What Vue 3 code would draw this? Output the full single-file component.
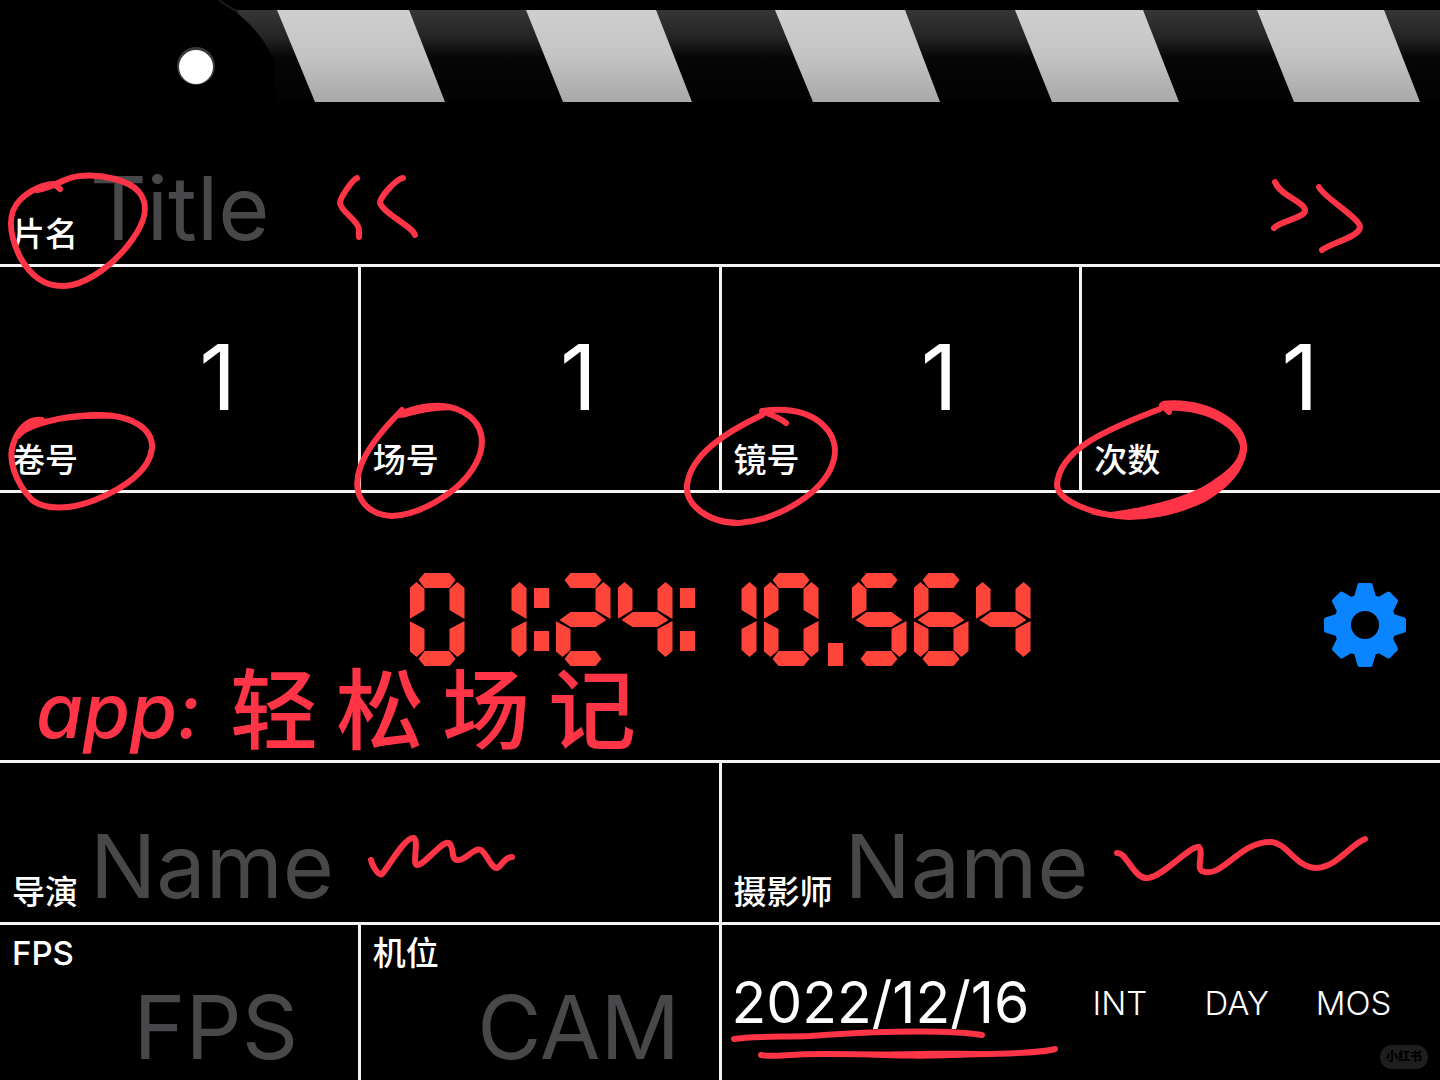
<script setup>
import { ref } from 'vue'

const counters = [
  { id: 'roll', label: '卷号', value: ref('1') },
  { id: 'scene', label: '场号', value: ref('1') },
  { id: 'shot', label: '镜号', value: ref('1') },
  { id: 'take', label: '次数', value: ref('1') }
]
const credits = [
  { id: 'director', label: '导演' },
  { id: 'camera', label: '摄影师' }
]
const flags = ['INT', 'DAY', 'MOS']
const timecode = '01:24:10.564'

// Lit segments for each digit of the timecode display
const lit = {
  0: 'abcdef',
  1: 'bc',
  2: 'abged',
  3: 'abgcd',
  4: 'fgbc',
  5: 'afgcd',
  6: 'afgecd',
  7: 'abc',
  8: 'abcdefg',
  9: 'abfgcd'
}

const stripes = [
  [277, 409, 445, 315],
  [526, 656, 692, 563],
  [775, 905, 940, 813],
  [1015, 1143, 1179, 1052],
  [1257, 1384, 1420, 1294]
]
</script>

<template>
  <main class="slate">
    <section class="cell wide head">
      <svg class="sticks" viewBox="0 0 1440 104" aria-hidden="true">
        <defs>
          <linearGradient id="bar" x1="0" y1="0" x2="0" y2="1">
            <stop offset="0" stop-color="#363636" />
            <stop offset="0.3" stop-color="#242424" />
            <stop offset="0.52" stop-color="#060606" />
            <stop offset="1" stop-color="#020202" />
          </linearGradient>
          <linearGradient id="stripe" x1="0" y1="0" x2="0" y2="1">
            <stop offset="0" stop-color="#cfcfcf" />
            <stop offset="0.5" stop-color="#c4c4c4" />
            <stop offset="1" stop-color="#a8a8a8" />
          </linearGradient>
        </defs>
        <rect x="200" y="10" width="1240" height="92" fill="url(#bar)" />
        <path d="M200 0 H218 C240 13 262 32 275 62 V104 H200 Z" fill="#000" />
        <path d="M219 0 C225 5 231 8 238 12" fill="none" stroke="#1c1c1c" stroke-width="2" />
        <polygon
          v-for="s in stripes"
          :key="s[0]"
          :points="`${s[0]},10 ${s[1]},10 ${s[2]},102 ${s[3]},102`"
          fill="url(#stripe)"
        />
        <circle cx="196" cy="66" r="19" fill="#3a3a3a" />
        <circle cx="196" cy="67" r="17" fill="#fff" />
      </svg>
      <div class="field">
        <label for="title">片名</label>
        <input id="title" type="text" placeholder="Title" />
      </div>
    </section>

    <section v-for="c in counters" :key="c.id" class="cell field counter">
      <label :for="c.id">{{ c.label }}</label>
      <input :id="c.id" v-model="c.value.value" type="text" inputmode="numeric" />
    </section>

    <section class="cell wide clock">
      <div class="timer" role="timer" :aria-label="timecode">
        <template v-for="(ch, i) in timecode" :key="i">
          <span v-if="ch === ':'" class="colon"></span>
          <span v-else-if="ch === '.'" class="dot"></span>
          <span v-else class="digit">
            <i v-for="seg in lit[ch]" :key="seg" class="seg" :class="seg"></i>
          </span>
        </template>
      </div>
      <button class="settings" type="button" aria-label="Settings">
        <svg viewBox="-42 -43 84 86" width="84" height="86">
          <path
            fill="#0a84ff"
            stroke="#0a84ff"
            stroke-width="4"
            stroke-linejoin="round"
            fill-rule="evenodd"
            d="M-5.500-40 H5.500 L9-28 L14-26 L23.500-31.500 L31-24 L26-14 L28-9 L39-5.500 V5.500 L28 9 L26 14 L31 24 L23.500 31.500 L14 26 L9 28 L5.500 40 H-5.500 L-9 28 L-14 26 L-23.500 31.500 L-31 24 L-26 14 L-28 9 L-39 5.500 V-5.500 L-28-9 L-26-14 L-31-24 L-23.500-31.500 L-14-26 L-9-28 Z M16 0 A16 16 0 1 0 -16 0 A16 16 0 1 0 16 0 Z"
          />
        </svg>
      </button>
      <p class="note"><span class="latin">app:</span><span>轻</span><span>松</span><span>场</span><span>记</span></p>
    </section>

    <section v-for="c in credits" :key="c.id" class="cell half field">
      <label :for="c.id">{{ c.label }}</label>
      <input :id="c.id" type="text" placeholder="Name" />
    </section>

    <section class="cell field spec">
      <label for="fps">FPS</label>
      <input id="fps" type="text" placeholder="FPS" />
    </section>
    <section class="cell field spec">
      <label for="cam">机位</label>
      <input id="cam" type="text" placeholder="CAM" />
    </section>
    <section class="cell half meta">
      <time datetime="2022-12-16">2022/12/16</time>
      <button v-for="f in flags" :key="f" type="button">{{ f }}</button>
    </section>

    <svg class="ink" viewBox="0 0 1440 1080" aria-hidden="true">
      <g class="pen">
        <path d="M60 189 L54 184 C46 185 41 190 37 190 C56 187 64 177 80 176 C102 174 129 180 139 192 C150 206 145 222 132 240 C115 264 90 281 72 285 C45 290 30 275 20 257 C8 232 8 212 20 200 C30 190 44 184 54 184" />
        <path d="M18 436 C26 425 60 416 95 415 C130 414 153 428 152 448 C150 470 125 488 95 500 C70 510 45 510 32 500 C15 482 8 460 13 445 C17 430 28 418 42 420" />
        <path d="M400 415 C420 405 445 402 463 412 C485 424 486 446 475 465 C460 492 420 515 392 516 C362 514 352 492 360 468 C366 450 385 427 402 410" />
        <path d="M786 423 C780 418 772 415 762 411 C785 408 808 411 823 425 C838 439 837 456 830 470 C817 496 775 521 739 523 C708 523 685 505 687 485 C691 455 724 433 762 415" />
        <path d="M1169 412 L1162 405 C1200 402 1243 420 1244 450 C1240 485 1190 515 1129 517 C1090 515 1058 500 1057 485 C1059 450 1105 430 1160 409" />
        <path d="M357 178 C352 180 340 198 340 203 C341 212 357 219 359 229 L359 237" />
        <path d="M403 178 C396 179 380 197 380 203 C384 214 412 226 415 235" />
        <path d="M1275 182 C1280 196 1306 202 1305 211 C1304 218 1278 222 1274 228" />
        <path d="M1319 187 C1323 197 1360 218 1360 227 C1360 237 1330 243 1322 250" />
        <path d="M371 860 C373 868 379 876 382 874 C388 868 405 836 414 838 C419 842 412 864 417 865 C424 866 442 840 449 843 C455 848 450 860 458 860 C465 861 474 847 481 850 C487 854 491 868 497 868 C502 866 504 857 512 857" />
        <path d="M1117 853 C1126 851 1134 880 1148 878 C1164 876 1190 845 1199 847 C1204 852 1196 868 1202 871 C1222 880 1240 840 1272 842 C1288 844 1296 868 1317 868 C1338 866 1350 845 1365 839" />
        <path d="M734 1039 C750 1036 780 1037 810 1036 C850 1033 940 1028 982 1035" />
        <path d="M761 1055 C775 1058 790 1053 830 1054 C900 1055 1030 1056 1055 1049" />
      </g>
      <!-- Filled swells where the pen pressed harder -->
      <g class="swell">
        <path d="M1162 401 C1205 396 1250 420 1247 450 C1243 472 1230 487 1205 502 C1165 521 1125 523 1090 514 C1135 511 1188 498 1212 481 C1232 468 1240 458 1240 446 C1236 425 1200 408 1164 411 Z" />
        <path d="M398 412 C420 401 450 400 467 412 C450 408 425 411 403 418 Z" />
        <path d="M60 418 C80 411 115 410 135 419 C115 418 85 418 60 421 Z" />
        <path d="M850 1054 C900 1050 960 1050 1010 1052 C970 1060 900 1060 850 1056 Z" />
      </g>
    </svg>
    <span class="mark">小红书</span>
  </main>
</template>

<style>
body {
  margin: 0;
  background: #000;
}
</style>

<style scoped>
.slate {
  position: relative;
  display: grid;
  grid-template-columns: repeat(4, minmax(0, 1fr));
  grid-template-rows:
    minmax(264px, auto) minmax(223px, auto) minmax(267px, auto)
    minmax(159px, auto) minmax(155px, 1fr);
  gap: 3px;
  min-height: 100vh;
  background: #f4f4f4;
  color: #fff;
  font-family: Inter, "Noto Sans CJK SC", sans-serif;
}
.cell {
  background: #000;
  min-width: 0;
}
.wide {
  grid-column: span 4;
}
.half {
  grid-column: span 2;
}
.head {
  display: flex;
  flex-direction: column;
  justify-content: space-between;
}
.sticks {
  display: block;
  width: 100%;
}
.field {
  display: flex;
  align-items: flex-end;
  gap: 12px;
  padding: 0 0 6px 12px;
}
.field label {
  flex: none;
  padding-bottom: 4px;
  font-size: 33px;
  line-height: 40px;
  font-weight: 500;
}
.field input {
  flex: 1;
  min-width: 0;
  width: 0;
  height: 100px;
  padding: 0;
  border: 0;
  outline: 0;
  background: none;
  color: #fff;
  font-family: inherit;
  font-size: 88px;
  line-height: 100px;
}
.field input::placeholder {
  color: #48484a;
  opacity: 1;
}
.counter,
.spec {
  gap: 0;
}
.counter input {
  align-self: center;
  padding-top: 3px;
  text-align: center;
  font-size: 91px;
}
.spec {
  padding: 8px 0 3px 12px;
}
.spec label {
  align-self: flex-start;
}
.spec input {
  text-align: center;
}
.clock {
  position: relative;
  display: grid;
  grid-template-columns: 1fr auto 1fr;
  align-items: center;
}
.timer {
  grid-column: 2;
  display: flex;
  gap: 7px;
  padding-bottom: 14px;
}
.digit {
  position: relative;
  width: 55px;
  height: 93px;
}
.seg {
  position: absolute;
  inset: 0;
  background: #ff453a;
}
.a {
  clip-path: polygon(9px 7px, 15px 0, 40px 0, 46px 7px, 40px 15px, 15px 15px);
}
.b {
  clip-path: polygon(48px 9px, 55px 15px, 55px 46px, 40px 37px, 40px 16px);
}
.c {
  clip-path: polygon(48px 84px, 55px 78px, 55px 48px, 40px 56px, 40px 77px);
}
.d {
  clip-path: polygon(9px 86px, 15px 93px, 40px 93px, 46px 86px, 40px 78px, 15px 78px);
}
.e {
  clip-path: polygon(7px 84px, 0 78px, 0 48px, 15px 56px, 15px 77px);
}
.f {
  clip-path: polygon(7px 9px, 0 15px, 0 46px, 15px 37px, 15px 16px);
}
.g {
  clip-path: polygon(4px 47px, 15px 39px, 40px 39px, 51px 47px, 40px 54px, 15px 54px);
}
.colon {
  display: flex;
  flex-direction: column;
  justify-content: space-between;
  width: 15px;
  height: 63px;
  padding: 15px 0;
}
.colon::before,
.colon::after {
  content: "";
  height: 20px;
  background: #ff453a;
}
.dot {
  align-self: flex-end;
  width: 15px;
  height: 23px;
  margin: 0 2px;
  background: #ff453a;
}
.settings {
  justify-self: end;
  margin-right: 33px;
  padding: 0 0 4px;
  border: 0;
  background: none;
  cursor: pointer;
}
.settings svg {
  display: block;
}
.note {
  position: absolute;
  left: 36px;
  bottom: 2px;
  display: flex;
  align-items: center;
  gap: 18px;
  margin: 0;
  color: #ff3447;
  font-size: 88px;
  line-height: 96px;
  font-weight: 500;
}
.note .latin {
  width: 176px;
  font-size: 76px;
  font-style: italic;
}
.meta {
  display: grid;
  grid-template-columns: 340px repeat(3, minmax(0, 1fr));
  align-items: center;
  padding-right: 28px;
}
.meta time {
  padding-left: 10px;
  font-size: 57px;
}
.meta button {
  padding: 0;
  border: 0;
  background: none;
  color: #fff;
  font-family: inherit;
  font-size: 33px;
  font-weight: 300;
}
.ink {
  position: absolute;
  top: 0;
  left: 0;
  width: 100%;
  pointer-events: none;
}
.pen path {
  fill: none;
  stroke: #ff3447;
  stroke-width: 6px;
  stroke-linecap: round;
  stroke-linejoin: round;
}
.swell path {
  fill: #ff3447;
}
.mark {
  position: absolute;
  right: 12px;
  bottom: 11px;
  width: 48px;
  border-radius: 12px;
  background: #1e1e1e;
  color: #000;
  font-size: 12px;
  line-height: 24px;
  font-weight: 900;
  text-align: center;
}
</style>
